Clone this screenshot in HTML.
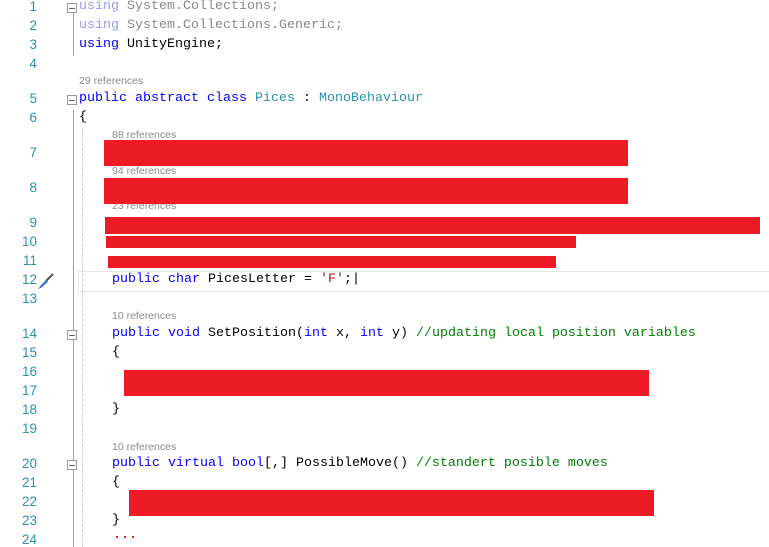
<!DOCTYPE html>
<html><head><style>
body{margin:0;width:769px;height:547px;background:#fff;position:relative;overflow:hidden;font-family:"Liberation Mono",monospace;font-size:13.33px}
.n{position:absolute;left:0;width:37px;text-align:right;color:#2b91af;font-size:13.5px;font-family:"Liberation Sans",sans-serif}
.c{position:absolute;white-space:pre;color:#000}
.r{position:absolute;font-family:"Liberation Sans",sans-serif;font-size:10.5px;color:#8a8a8a}
.k{color:#0000ff}.t{color:#2b91af}.g{color:#008000}.u{color:#9999ee}.x{color:#888}
.red{position:absolute;background:#ed1c24}
.fold{position:absolute;width:8px;height:8px;border:1px solid #999;background:#fff}
.fold:after{content:"";position:absolute;left:1px;top:4px;width:6px;height:1px;background:#666}
</style></head><body>
<div style="position:absolute;left:73px;top:110px;width:1px;height:437px;background:#a0a0a0"></div>
<div style="position:absolute;left:73px;top:10px;width:1px;height:46px;background:#a0a0a0"></div>
<div style="position:absolute;left:82px;top:128px;height:419px;border-left:1px dashed #ccc"></div>
<div style="position:absolute;left:78px;top:271px;width:700px;height:19px;border:1px solid #e4e4e4;border-right:none"></div>
<div class="fold" style="left:67px;top:3px"></div>
<div class="fold" style="left:67px;top:95px"></div>
<div class="fold" style="left:67px;top:330px"></div>
<div class="fold" style="left:67px;top:460px"></div>

<div class="n" style="top:-1px">1</div><div class="n" style="top:18px">2</div><div class="n" style="top:37px">3</div><div class="n" style="top:56px">4</div>
<div class="n" style="top:91px">5</div><div class="n" style="top:110px">6</div><div class="n" style="top:145px">7</div><div class="n" style="top:180px">8</div>
<div class="n" style="top:215px">9</div><div class="n" style="top:234px">10</div><div class="n" style="top:253px">11</div><div class="n" style="top:272px">12</div>
<div class="n" style="top:291px">13</div><div class="n" style="top:326px">14</div><div class="n" style="top:345px">15</div><div class="n" style="top:364px">16</div>
<div class="n" style="top:383px">17</div><div class="n" style="top:402px">18</div><div class="n" style="top:421px">19</div><div class="n" style="top:456px">20</div>
<div class="n" style="top:475px">21</div><div class="n" style="top:494px">22</div><div class="n" style="top:513px">23</div><div class="n" style="top:532px">24</div>
<svg style="position:absolute;left:37px;top:272px" width="18" height="18"><path d="M16 2 L9 9" stroke="#555" stroke-width="2"/><path d="M9 8 L4 13 Q2 16 1 17 Q5 16 7 13 L11 10Z" fill="#3a78c0"/></svg>

<div class="c" style="left:79px;top:-1px"><span class="u">using</span><span class="x"> System.Collections;</span></div>
<div class="c" style="left:79px;top:18px"><span class="u">using</span><span class="x"> System.Collections.Generic;</span></div>
<div class="c" style="left:79px;top:37px"><span class="k">using</span> UnityEngine;</div>
<div class="r" style="left:79px;top:75px">29 references</div>
<div class="c" style="left:79px;top:91px"><span class="k">public abstract class</span> <span class="t">Pices</span> : <span class="t">MonoBehaviour</span></div>
<div class="c" style="left:79px;top:110px">{</div>
<div class="r" style="left:112px;top:129px">88 references</div>
<div class="r" style="left:112px;top:165px">94 references</div>
<div class="r" style="left:112px;top:200px">23 references</div>
<div class="c" style="left:112px;top:272px"><span class="k">public char</span> PicesLetter = <span style="color:#a31515">'F'</span>;|</div>
<div class="r" style="left:112px;top:310px">10 references</div>
<div class="c" style="left:112px;top:326px"><span class="k">public void</span> SetPosition(<span class="k">int</span> x, <span class="k">int</span> y) <span class="g">//updating local position variables</span></div>
<div class="c" style="left:112px;top:345px">{</div>
<div class="c" style="left:112px;top:402px">}</div>
<div class="r" style="left:112px;top:441px">10 references</div>
<div class="c" style="left:112px;top:456px"><span class="k">public virtual bool</span>[,] PossibleMove() <span class="g">//standert posible moves</span></div>
<div class="c" style="left:112px;top:475px">{</div>
<div class="c" style="left:112px;top:513px">}</div>
<div class="c" style="left:113px;top:528px;color:#e00;font-weight:bold">...</div>

<div class="red" style="left:104px;top:140px;width:524px;height:26px"></div>
<div class="red" style="left:104px;top:178px;width:524px;height:26px"></div>
<div class="red" style="left:105px;top:217px;width:655px;height:17px"></div>
<div class="red" style="left:106px;top:236px;width:470px;height:12px"></div>
<div class="red" style="left:108px;top:256px;width:448px;height:12px"></div>
<div class="red" style="left:124px;top:370px;width:525px;height:26px"></div>
<div class="red" style="left:129px;top:490px;width:525px;height:26px"></div>
</body></html>
